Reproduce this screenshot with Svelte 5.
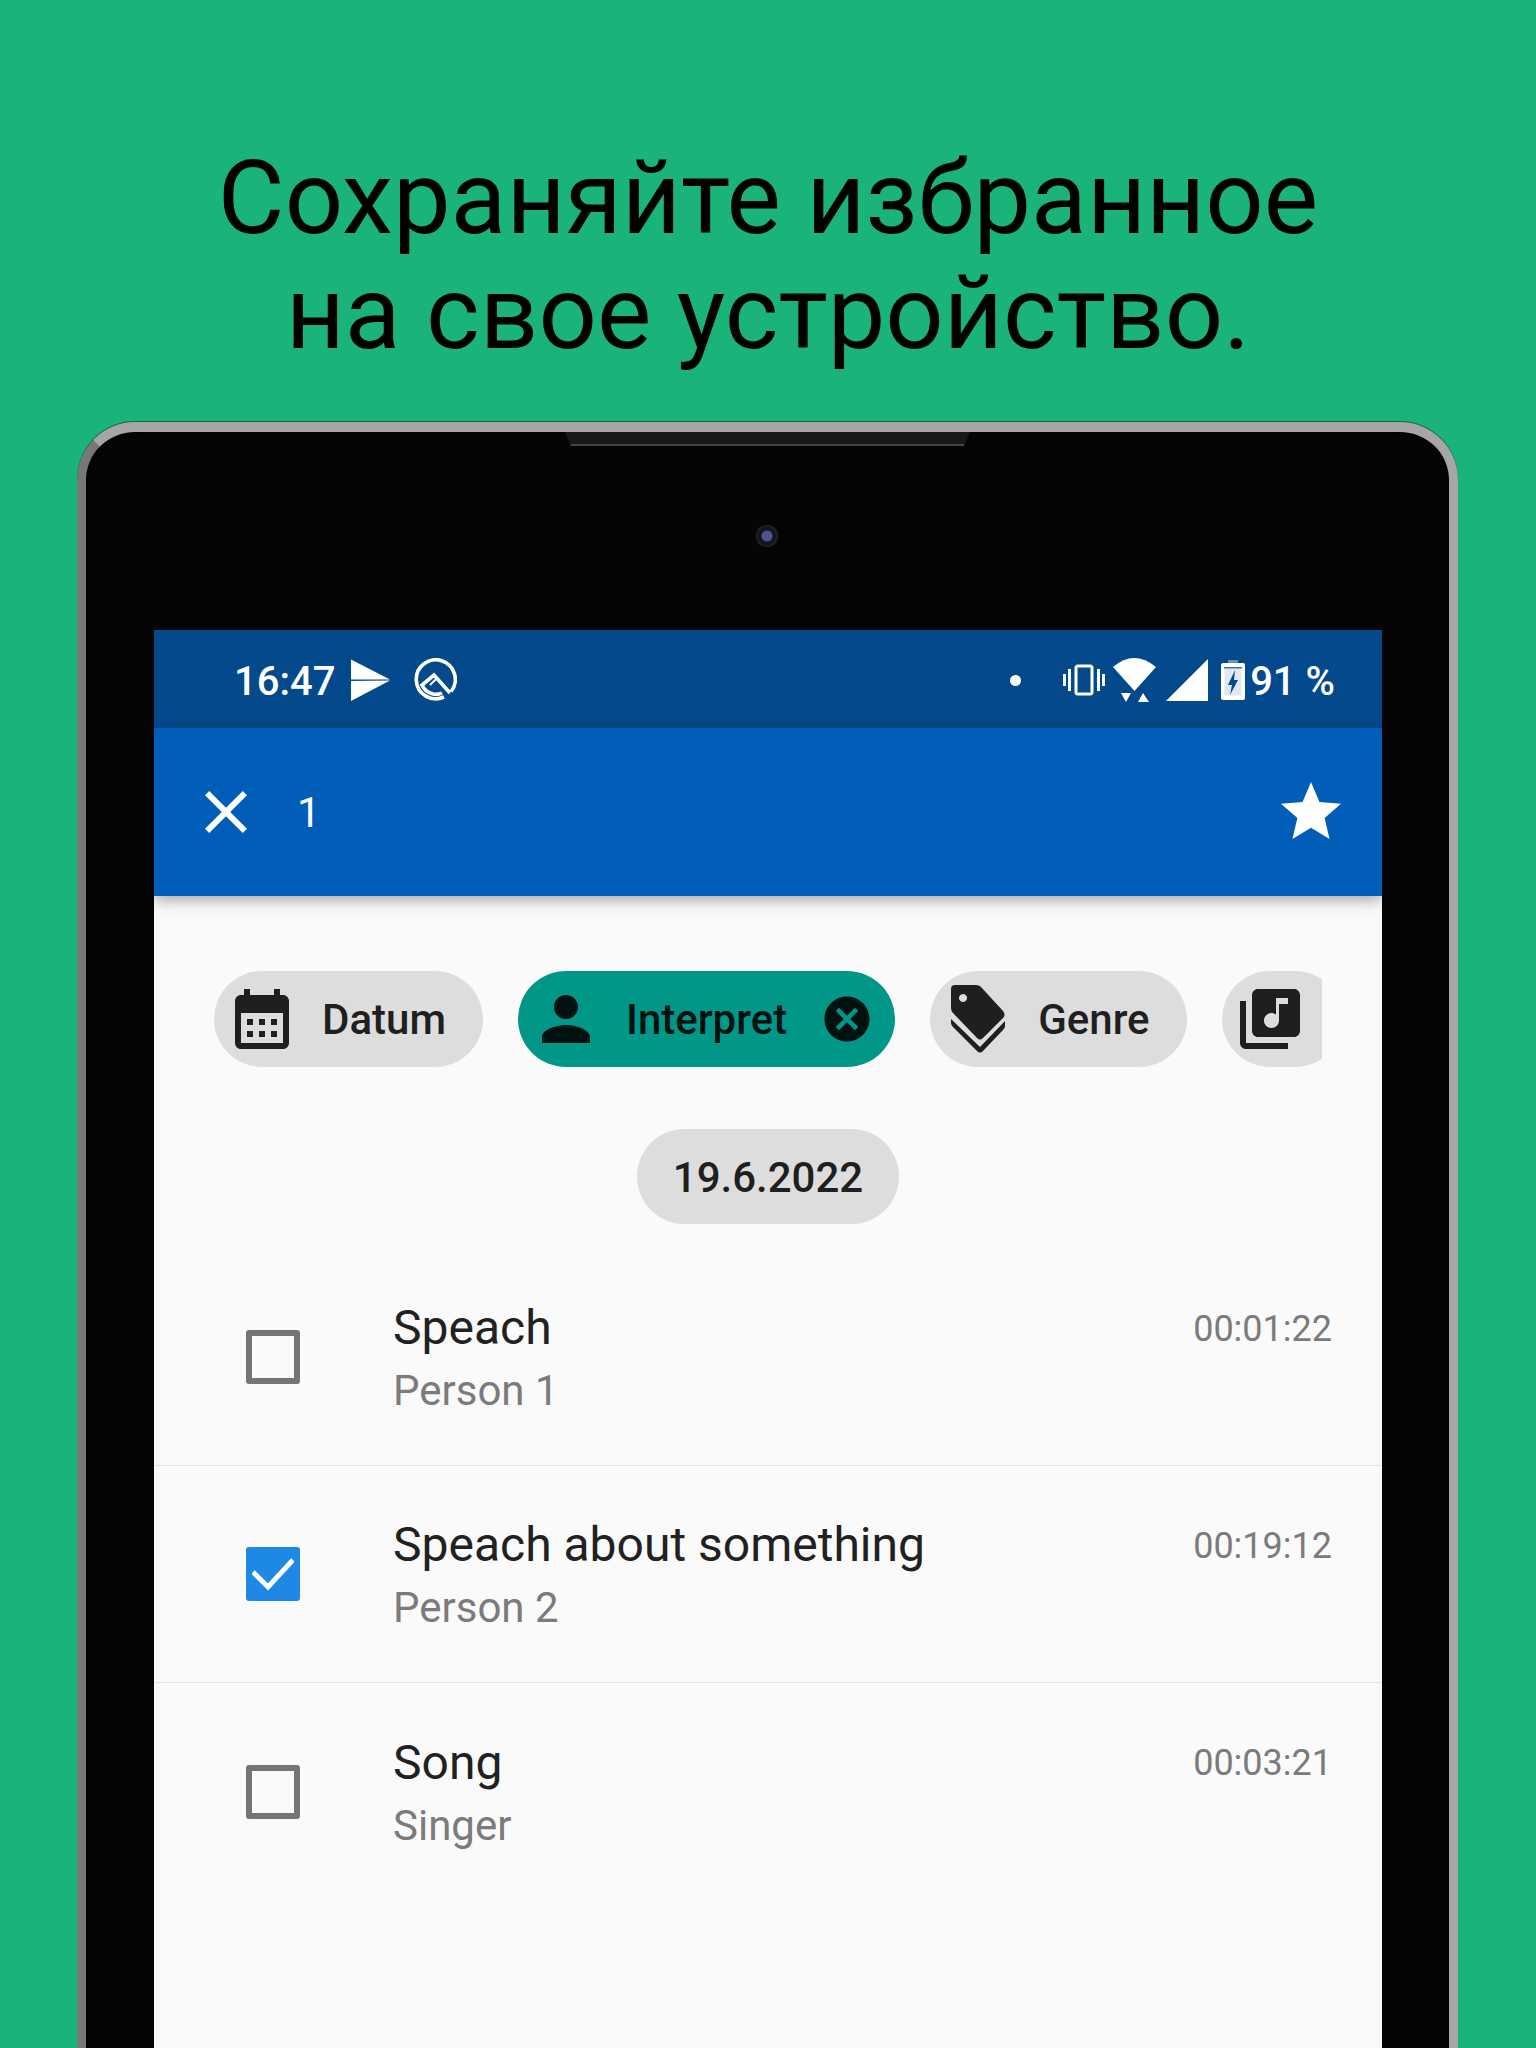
<script>
  const chips = [
    { label: "Datum", icon: "date" },
    { label: "Interpret", icon: "person", active: true },
    { label: "Genre", icon: "tags" },
    { label: "", icon: "album" }
  ];

  const rows = [
    { title: "Speach", sub: "Person 1", time: "00:01:22", checked: false },
    { title: "Speach about something", sub: "Person 2", time: "00:19:12", checked: true },
    { title: "Song", sub: "Singer", time: "00:03:21", checked: false }
  ];
</script>

<div class="page">
  <h1>Сохраняйте избранное<br />на свое устройство.</h1>

  <div class="device">
    <div class="notch"></div>
    <div class="camera"></div>

    <div class="screen">
      <div class="statusbar">
        <div class="status-left">
          <span class="clock">16:47</span>
          <svg class="send" width="42" height="44" viewBox="0 0 42 44">
            <path d="M2 1.500 41 21.500H2zM2 23 41 22.500 2 43z" fill="#fff" />
          </svg>
          <svg class="qicon" width="44" height="44" viewBox="0 0 44 44" fill="none" stroke="#fff" stroke-width="3.600">
            <path d="M31 39A19.500 19.500 0 1 1 38 33.500" />
            <path d="M37 35 21 17 9 27Q12 34 20 36Q25 37 29 35" />
            <path d="M17 27 23 21" stroke-width="2" />
          </svg>
        </div>
        <div class="status-right">
          <span class="dot"></span>
          <svg class="vibrate" width="42" height="32" viewBox="0 0 42 32" fill="#fff">
            <rect x="0" y="10" width="3" height="12" />
            <rect x="5" y="5" width="3" height="22" />
            <rect x="34" y="5" width="3" height="22" />
            <rect x="39" y="10" width="3" height="12" />
            <rect x="13" y="2" width="16" height="28" rx="2" fill="none" stroke="#fff" stroke-width="3" />
          </svg>
          <svg class="wifi" width="44" height="46" viewBox="0 0 44 46" fill="#fff">
            <path d="M0 10Q21-8 43 10L21.500 34z" />
            <path d="M8 36H18L13 45zM30 36 36 45H25z" />
          </svg>
          <svg class="signal" width="44" height="44" viewBox="0 0 44 44" fill="#fff">
            <path d="M43 1V43H1z" />
          </svg>
          <svg class="battery" width="24" height="40" viewBox="0 0 24 40">
            <path d="M7 0H17V3H7z" fill="#fff" opacity="0.4" />
            <path d="M2 3H22Q24 3 24 5V38Q24 40 22 40H2Q0 40 0 38V5Q0 3 2 3z" fill="#fff" />
            <rect x="3.500" y="8.500" width="17" height="27" fill="#dfe8f2" />
            <rect x="3" y="7" width="18" height="1.500" fill="#03498c" opacity="0.8" />
            <path d="M14 10 7 25H11L9 35 17 20H13z" fill="#03498c" />
          </svg>
          <span class="percent">91 %</span>
        </div>
      </div>

      <div class="toolbar">
        <svg width="72" height="72" viewBox="0 0 24 24" fill="#fff">
          <path d="M19 6.410 17.590 5 12 10.590 6.410 5 5 6.410 10.590 12 5 17.590 6.410 19 12 13.410 17.590 19 19 17.590 13.410 12z" />
        </svg>
        <span class="count">1</span>
        <svg width="72" height="72" viewBox="0 0 24 24" fill="#fff">
          <path d="M12 17.270 18.180 21l-1.640-7.030L22 9.240l-7.190-.61L12 2 9.190 8.630 2 9.240l5.460 4.730L5.820 21z" />
        </svg>
      </div>

      <div class="chips">
        {#each chips as chip}
          <div class="chip" class:active={chip.active}>
            {#if chip.icon === "date"}
              <svg width="72" height="72" viewBox="0 0 24 24" fill="currentColor">
                <path d="M19 4h-1V2h-2v2H8V2H6v2H5c-1.110 0-1.990.9-1.990 2L3 20c0 1.100.89 2 2 2h14c1.100 0 2-.9 2-2V6c0-1.100-.9-2-2-2zm0 16H5V10h14v10zM9 14H7v-2h2v2zm4 0h-2v-2h2v2zm4 0h-2v-2h2v2zm-8 4H7v-2h2v2zm4 0h-2v-2h2v2zm4 0h-2v-2h2v2z" />
              </svg>
            {:else if chip.icon === "person"}
              <svg width="72" height="72" viewBox="0 0 24 24" fill="currentColor">
                <path d="M12 12c2.210 0 4-1.790 4-4s-1.790-4-4-4-4 1.790-4 4 1.790 4 4 4zm0 2c-2.670 0-8 1.340-8 4v2h16v-2c0-2.660-5.330-4-8-4z" />
              </svg>
            {:else if chip.icon === "tags"}
              <svg width="72" height="72" viewBox="0 -3 72 72" fill="currentColor">
                <path fill-rule="evenodd" d="M13-1H34Q37-1 39 1L61 25Q64 29 61 32L41 52Q38 55 35 52L11 27Q9 25 9 22V3Q9-1 13-1zM21 8a4 4 0 1 0 .01 0z" />
                <path d="M9 33 38 61 63 35V40Q63 42 61 44L41 65Q38 68 35 65L11 41Q9 39 9 37z" />
              </svg>
            {:else}
              <svg width="72" height="72" viewBox="0 0 24 24" fill="currentColor">
                <path d="M20 2H8c-1.100 0-2 .9-2 2v12c0 1.100.9 2 2 2h12c1.100 0 2-.9 2-2V4c0-1.100-.9-2-2-2zm-2 5h-3v5.500c0 1.380-1.120 2.500-2.500 2.500S10 13.880 10 12.500s1.120-2.500 2.500-2.500c.57 0 1.080.19 1.500.51V5h4v2zM4 6H2v14c0 1.100.9 2 2 2h14v-2H4V6z" />
              </svg>
            {/if}
            {#if chip.label}
              <span class="chip-label">{chip.label}</span>
            {/if}
            {#if chip.active}
              <svg class="chip-close" width="54" height="54" viewBox="0 0 24 24" fill="currentColor">
                <path d="M12 2C6.470 2 2 6.470 2 12s4.470 10 10 10 10-4.470 10-10S17.530 2 12 2zm5 13.590L15.590 17 12 13.410 8.410 17 7 15.590 10.590 12 7 8.410 8.410 7 12 10.590 15.590 7 17 8.410 13.410 12 17 15.590z" />
              </svg>
            {/if}
          </div>
        {/each}
      </div>

      <div class="date-row">
        <span class="date-chip">19.6.2022</span>
      </div>

      <div class="list">
        {#each rows as row}
          <div class="row">
            <span class="box" class:checked={row.checked}>
              {#if row.checked}
                <svg width="42" height="42" viewBox="0 0 42 42" fill="none" stroke="#fff" stroke-width="5">
                  <path d="M1 19 16 34 41 7" />
                </svg>
              {/if}
            </span>
            <div class="text">
              <div class="title">{row.title}</div>
              <div class="sub">{row.sub}</div>
            </div>
            <span class="time">{row.time}</span>
          </div>
        {/each}
      </div>
    </div>
  </div>
</div>

<style>
  :global(body) {
    margin: 0;
    font-family: Roboto, sans-serif;
  }

  .page {
    width: 1536px;
    height: 2048px;
    overflow: hidden;
    background: #1ab37a;
    box-sizing: border-box;
    padding-top: 141px;
  }

  h1 {
    margin: 0;
    text-align: center;
    font-weight: 400;
    font-size: 102.600px;
    line-height: 115px;
    color: #000;
  }

  /* tablet body */
  .device {
    position: relative;
    box-sizing: border-box;
    width: 1381px;
    height: 1800px;
    margin: 51px 0 0 77px;
    padding: 198px 67px 0 68px;
    background: #050505;
    border-style: solid;
    border-width: 10px 9px 0 9px;
    border-color: #a6a6a6;
    border-left-color: #777;
    border-radius: 58px 58px 0 0;
    box-shadow: 0 -1px 0 #1f5f46, inset 0 0 4px #000;
  }

  .notch {
    position: absolute;
    top: 0;
    left: 479px;
    width: 405px;
    height: 14px;
    box-sizing: border-box;
    background: #181818;
    border-bottom: 2px solid #444;
    clip-path: polygon(0 0, 100% 0, 98.500% 100%, 1.500% 100%);
  }

  .camera {
    position: absolute;
    top: 93px;
    left: 670px;
    width: 22px;
    height: 22px;
    border-radius: 50%;
    background: radial-gradient(circle at 50% 50%, #4a5590 0 5px, #14141c 6px 9px, #2a2a2a 11px);
  }

  .screen {
    height: 1600px;
    background: #fafafa;
  }

  .statusbar {
    height: 98px;
    box-sizing: border-box;
    padding: 2px 47px 0 80px;
    background: #03498c;
    color: #fff;
    display: flex;
    align-items: center;
    justify-content: space-between;
  }

  .status-left,
  .status-right {
    display: flex;
    align-items: center;
  }

  .clock {
    font-size: 40px;
    font-weight: 500;
    width: 115px;
    margin-top: 2px;
  }

  .qicon {
    margin-left: 22px;
  }

  .dot {
    width: 11px;
    height: 11px;
    border-radius: 50%;
    background: #fff;
    margin-right: 42px;
  }

  .wifi {
    margin-left: 8px;
  }

  .signal {
    margin-left: 8px;
  }

  .battery {
    margin-left: 12px;
  }

  .percent {
    font-size: 40px;
    font-weight: 500;
    margin: 2px 0 0 5px;
  }

  .toolbar {
    height: 168px;
    box-sizing: border-box;
    padding: 0 35px 0 36px;
    background: #005eb8;
    color: #fff;
    display: flex;
    align-items: center;
    box-shadow: 0 4px 14px rgba(0, 0, 0, 0.35);
    position: relative;
  }

  .count {
    flex: 1;
    font-size: 42px;
    margin-left: 35px;
  }

  .chips {
    display: flex;
    gap: 35px;
    margin: 75px 60px 0;
    overflow: hidden;
  }

  .chip {
    flex-shrink: 0;
    height: 96px;
    box-sizing: border-box;
    padding: 0 37px 0 12px;
    border-radius: 48px;
    background: #dddddd;
    color: #1f1f1f;
    display: flex;
    align-items: center;
  }

  .chip.active {
    background: #009688;
    color: #00120f;
    padding-right: 21px;
  }

  .chip-label {
    margin-left: 24px;
    font-size: 42px;
    font-weight: 500;
  }

  .chip-close {
    margin-left: 33px;
  }

  .date-row {
    display: flex;
    justify-content: center;
    margin-top: 62px;
  }

  .date-chip {
    height: 95px;
    line-height: 97px;
    padding: 0 36px;
    border-radius: 48px;
    background: #dddddd;
    color: #1f1f1f;
    font-size: 42px;
    font-weight: 500;
  }

  .list {
    margin-top: 25px;
  }

  .row {
    height: 217px;
    box-sizing: border-box;
    padding: 0 50px 0 92px;
    border-bottom: 1px solid #e3e3e3;
    display: flex;
    align-items: center;
  }

  .row:last-child {
    border-bottom: none;
  }

  .box {
    width: 54px;
    height: 54px;
    box-sizing: border-box;
    border: 6px solid #757575;
    border-radius: 3px;
    flex-shrink: 0;
    display: flex;
    align-items: center;
    justify-content: center;
  }

  .box.checked {
    background: #1e88e5;
    border: none;
  }

  .text {
    flex: 1;
    margin-left: 93px;
    padding-top: 4px;
  }

  .title {
    font-size: 48px;
    line-height: 63px;
    color: #212121;
  }

  .sub {
    font-size: 42px;
    line-height: 63px;
    color: #7b7b7b;
  }

  .time {
    align-self: flex-start;
    margin-top: 59px;
    font-size: 36px;
    color: #7b7b7b;
  }
</style>
